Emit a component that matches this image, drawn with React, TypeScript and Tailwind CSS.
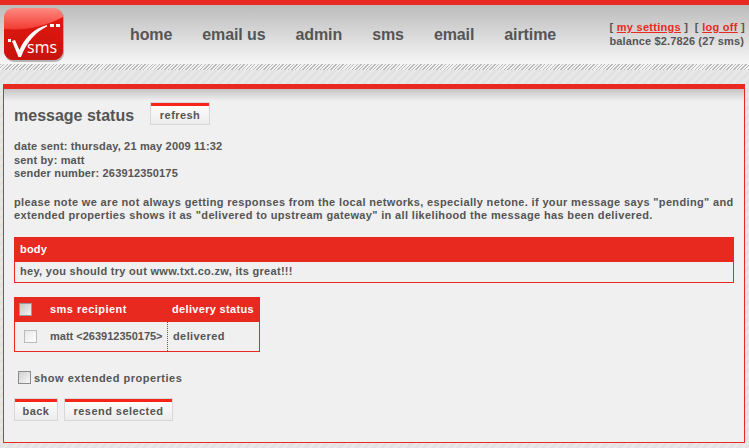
const font = { fontFamily: '"Liberation Sans", Arial, sans-serif' };

const Logo = () => (
  <svg width="61" height="54" viewBox="0 0 61 54" className="shrink-0">
    <defs>
      <linearGradient id="logoTop" x1="0" y1="0" x2="0" y2="1">
        <stop offset="0" stopColor="#ff8a82" />
        <stop offset="0.45" stopColor="#ef3328" />
        <stop offset="1" stopColor="#e0201a" />
      </linearGradient>
      <linearGradient id="logoBottom" x1="0" y1="0" x2="0" y2="1">
        <stop offset="0" stopColor="#e0170f" />
        <stop offset="1" stopColor="#c8140d" />
      </linearGradient>
    </defs>
    <rect x="1" y="1" width="59" height="53" rx="9" fill="#777" opacity="0.5" />
    <rect x="0" y="0" width="59" height="52" rx="9" fill="url(#logoTop)" />
    <path d="M0 21 C20 23 40 19 59 9 V43 a9 9 0 0 1 -9 9 H9 a9 9 0 0 1 -9 -9 Z" fill="url(#logoBottom)" />
    <path d="M8 33 L11 32 L15.5 42 C21 29 31 20 43 17 L43 18.5 C33 23 23 33 17 49 L14.5 49 Z" fill="#fff" />
    <rect x="4" y="31" width="3" height="3" fill="#fff" />
    <rect x="46" y="16" width="4" height="3" fill="#fff" />
    <rect x="52" y="16" width="4" height="3" fill="#fff" />
    <text x="23" y="45" fill="#fff" fontSize="16" fontFamily="Open Sans, sans-serif">sms</text>
  </svg>
);

const Button = ({ label, className }: { label: string; className: string }) => (
  <div className={`border border-[#d8d8d8] bg-gradient-to-b from-[#ffffff] to-[#ececec] text-center text-[11px] font-bold tracking-[0.45px] text-[#555] ${className}`}>
    <div className="h-[3px] bg-[#f7261a]" />
    <div className="pt-[1px]">{label}</div>
  </div>
);

export default function App() {
  const nav = ["home", "email us", "admin", "sms", "email", "airtime"];

  return (
    <div className="h-[448px] w-[749px] overflow-hidden bg-[repeating-linear-gradient(135deg,#e8e8e8_0,#e8e8e8_3px,#e2e2e2_3px,#e2e2e2_6px)]" style={font}>
      <div className="h-[5px] bg-[#e8291f]" />

      {/* header */}
      <div className="flex h-[59px] items-start bg-gradient-to-b from-[#bcbcbc] to-[#f6f6f6] pl-1 pt-[3px]">
        <Logo />
        <nav className="ml-[65px] mt-[15px] flex gap-[30px] text-[16px] font-bold tracking-[-0.1px] text-[#555]">
          {nav.map((item) => (
            <span key={item}>{item}</span>
          ))}
        </nav>
        <div className="ml-auto mr-[4px] mt-[12px] text-[11px] font-bold leading-[14px] tracking-[0.13px] text-[#555]">
          <div className="text-right whitespace-pre tracking-[0.28px]">
            [ <span className="text-[#e8291f] underline">my settings</span> ]  [ <span className="text-[#e8291f] underline">log off</span> ]
          </div>
          <div>balance $2.7826 (27 sms)</div>
        </div>
      </div>

      <div className="h-[6px] bg-[repeating-linear-gradient(135deg,#b9b9b9_0,#b9b9b9_1px,#f2f2f2_1px,#f2f2f2_2.5px)]" />

      {/* main panel */}
      <div className="ml-[3px] mt-[14px] h-[359px] w-[742px] border-x border-b border-[#e8291f] border-t-[5px] bg-[#f0f0f0]">
        <div className="h-[12px] bg-gradient-to-b from-[#c4c4c4] to-[#f0f0f0]" />

        <div className="-mt-[2px] px-[10px] text-[11px] font-bold text-[#555]">
          <div className="flex items-start">
            <h1 className="mt-[5px] text-[16px] font-bold">message status</h1>
            <Button label="refresh" className="ml-[16px] mt-[3px] h-[23px] w-[60px]" />
          </div>

          <div className="mt-[12px] leading-[13.5px] tracking-[0.16px]">
            <div>date sent: thursday, 21 may 2009 11:32</div>
            <div>sent by: matt</div>
            <div>sender number: 263912350175</div>
          </div>

          <p className="mt-[15px] w-[722px] leading-[13.5px] tracking-[0.35px]">
            please note we are not always getting responses from the local networks, especially netone. if your message says "pending" and extended properties shows it as "delivered to upstream gateway" in all likelihood the message has been delivered.
          </p>

          <div className="mt-[14px] w-[720px] border border-[#e8291f]">
            <div className="flex h-[24px] items-center bg-[#e8291f] pl-[5px] tracking-[0.2px] text-white">body</div>
            <div className="flex h-[20px] items-center pl-[5px] tracking-[0.3px]">hey, you should try out www.txt.co.zw, its great!!!</div>
          </div>

          <div className="mt-[14px] w-[246px] border border-[#e8291f]">
            <div className="flex h-[24px] items-center bg-[#e8291f] text-white">
              <div className="ml-[4px] h-[13px] w-[13px] border border-[#999] bg-gradient-to-br from-[#c8c8c8] to-[#f4f4f4]" />
              <span className="ml-[18px] w-[122px] tracking-[0.46px]">sms recipient</span>
              <span className="tracking-[0.33px]">delivery status</span>
            </div>
            <div className="flex h-[29px] items-center">
              <div className="ml-[9px] h-[13px] w-[13px] border border-[#bbb] bg-gradient-to-br from-[#e8e8e8] to-[#fff]" />
              <div className="ml-[13px] flex h-full w-[118px] items-center border-r border-dotted border-[#e8291f]">matt &lt;263912350175&gt;</div>
              <span className="ml-[5px] tracking-[0.4px]">delivered</span>
            </div>
          </div>

          <div className="ml-[4px] mt-[18px] flex items-center">
            <div className="h-[13px] w-[13px] border border-[#8c8c8c] bg-gradient-to-br from-[#d0d0d0] to-[#f8f8f8]" />
            <span className="ml-[3px] tracking-[0.5px]">show extended properties</span>
          </div>

          <div className="mt-[12px] flex gap-[6px]">
            <Button label="back" className="h-[23px] w-[44px]" />
            <Button label="resend selected" className="h-[23px] w-[109px]" />
          </div>
        </div>
      </div>
    </div>
  );
}
